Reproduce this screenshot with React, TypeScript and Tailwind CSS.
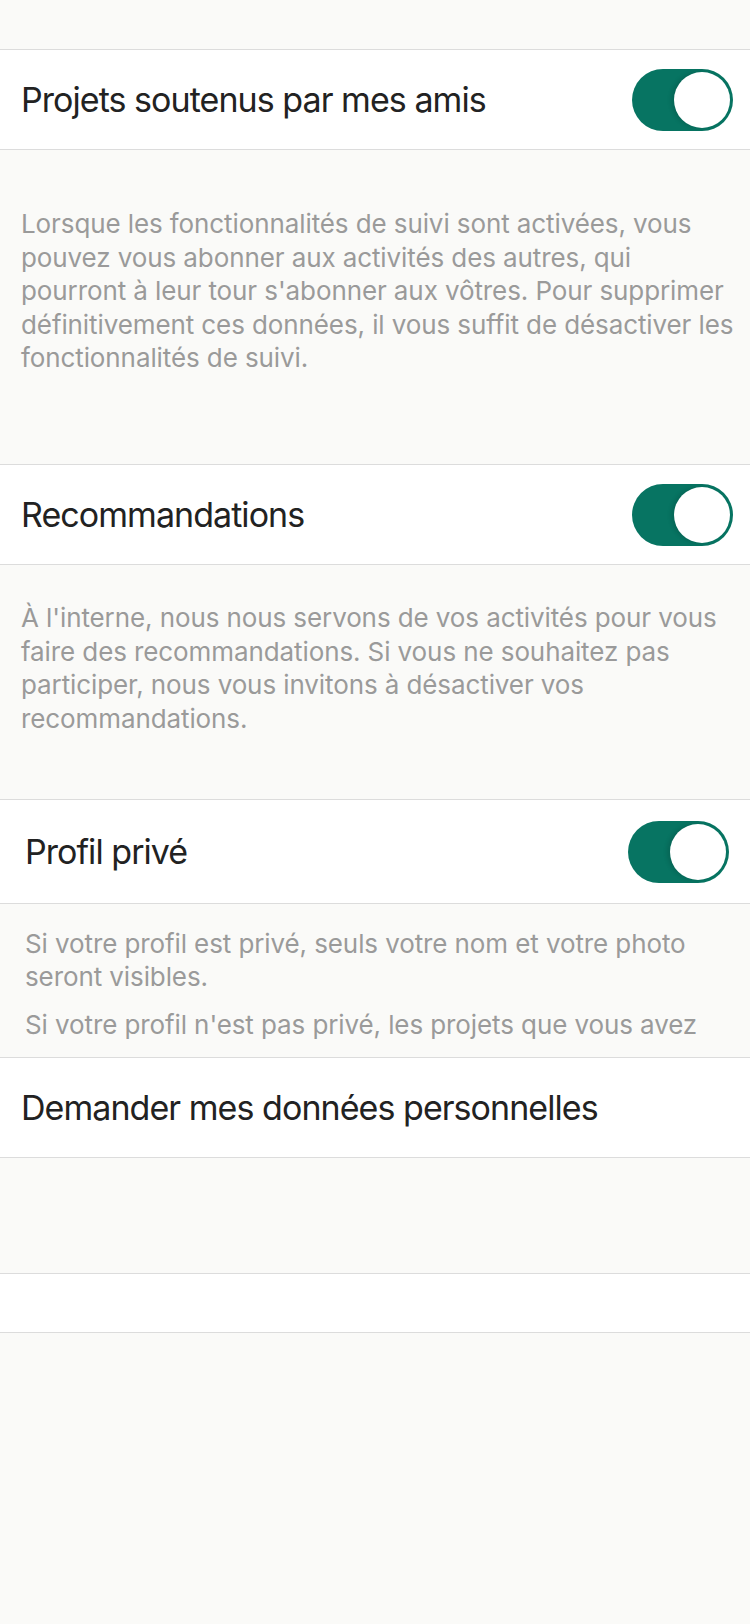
import React from "react";

const font = { fontFamily: "Inter, 'Noto Sans', sans-serif" };

function Toggle({ shift = false }: { shift?: boolean }) {
  return (
    <div
      className={`relative h-[62px] w-[101px] shrink-0 rounded-full bg-[#077462] ${shift ? "mr-[4px]" : ""}`}
    >
      <div className="absolute right-[3px] top-[3px] h-[56px] w-[56px] rounded-full bg-white shadow-[-3px_0_4px_rgba(0,0,0,0.12)]" />
    </div>
  );
}

function Row({
  title,
  toggle = true,
  inset = false,
  tall = false,
}: {
  title: string;
  toggle?: boolean;
  inset?: boolean;
  tall?: boolean;
}) {
  return (
    <div
      className={`flex ${tall ? "h-[104px]" : "h-[100px]"} items-center justify-between border-b border-[#dcdcdc] bg-white ${inset ? "pl-[25px] pr-[17px]" : "pl-[21px] pr-[17px]"}`}
    >
      <span className="text-[34px] tracking-[-0.95px] text-[#222222]">{title}</span>
      {toggle && <Toggle shift={inset} />}
    </div>
  );
}

function Lines({ lines }: { lines: string[] }) {
  return (
    <>
      {lines.map((l, i) => (
        <span key={i} className="block whitespace-nowrap">
          {l}
        </span>
      ))}
    </>
  );
}

export default function App() {
  return (
    <div className="min-h-[1624px] bg-[#fafaf8]" style={font}>
      <div className="h-[50px] border-b border-[#dcdcdc]" />
      <Row title="Projets soutenus par mes amis" />
      <div className="h-[315px] overflow-hidden border-b border-[#dcdcdc] pl-[21px] pr-[4px] pt-[57px] text-[26px] leading-[33.5px] tracking-[-0.1px] text-[#9a9a9a]">
        <Lines
          lines={[
            "Lorsque les fonctionnalités de suivi sont activées, vous",
            "pouvez vous abonner aux activités des autres, qui",
            "pourront à leur tour s'abonner aux vôtres. Pour supprimer",
            "définitivement ces données, il vous suffit de désactiver les",
            "fonctionnalités de suivi.",
          ]}
        />
      </div>
      <Row title="Recommandations" />
      <div className="h-[235px] border-b border-[#dcdcdc] pl-[21px] pr-[4px] pt-[36px] text-[26px] leading-[33.5px] tracking-[-0.1px] text-[#9a9a9a]">
        <Lines
          lines={[
            "À l'interne, nous nous servons de vos activités pour vous",
            "faire des recommandations. Si vous ne souhaitez pas",
            "participer, nous vous invitons à désactiver vos",
            "recommandations.",
          ]}
        />
      </div>
      <Row title="Profil privé" inset tall />
      <div className="h-[154px] overflow-hidden border-b border-[#dcdcdc] pl-[25px] pr-[4px] pt-[23px] text-[26px] leading-[33px] tracking-[-0.1px] text-[#9a9a9a]">
        <p>
          <Lines lines={["Si votre profil est privé, seuls votre nom et votre photo", "seront visibles."]} />
        </p>
        <p className="mt-[15px]">Si votre profil n'est pas privé, les projets que vous avez</p>
      </div>
      <Row title="Demander mes données personnelles" toggle={false} />
      <div className="h-[116px] border-b border-[#dcdcdc]" />
      <div className="h-[59px] border-b border-[#dcdcdc] bg-white" />
    </div>
  );
}
